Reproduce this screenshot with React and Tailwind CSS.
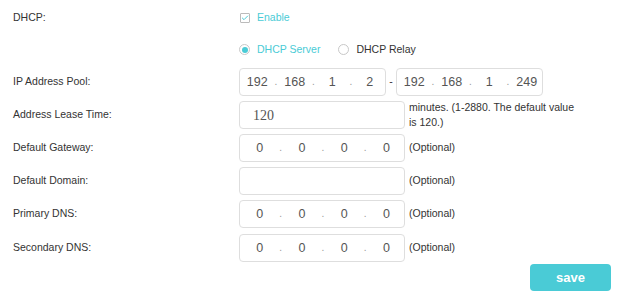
import { Check } from 'lucide-react'

const FONT = { fontFamily: '"Liberation Sans", Arial, sans-serif' }

function IpBox({ parts, width }) {
  return (
    <div className={`flex h-[28px] items-center rounded-[4px] border border-[#dedede] bg-white pl-[2px] ${width}`}>
      {parts.map((p, i) => (
        <div key={i} className="contents">
          {i > 0 && <span className="w-[7px] text-center text-[10px] leading-none text-[#999]">.</span>}
          <span className="flex-1 text-center text-[12.5px] text-[#555]">{p}</span>
        </div>
      ))}
    </div>
  )
}

function Row({ label, children, className = '' }) {
  return (
    <div className={`flex items-center ${className}`}>
      <div className="w-[226px] text-[10.5px] text-[#333]">{label}</div>
      {children}
    </div>
  )
}

export default function App() {
  return (
    <div className="h-[302px] w-[619px] bg-white pl-[13px] pt-[5px]" style={FONT}>
      <Row label="DHCP:" className="h-[25px]">
        <div className="ml-[1px] flex items-center">
          <span className="flex h-[10px] w-[10px] items-center justify-center rounded-[1px] border border-[#bbb] bg-white">
            <Check size={8} strokeWidth={3} className="text-[#4acbd6]" />
          </span>
          <span className="ml-[7px] text-[10.5px] text-[#4acbd6]">Enable</span>
        </div>
      </Row>

      <Row label="" className="mt-[7px] h-[25px]">
        <div className="flex items-center">
          <span className="flex h-[11px] w-[11px] items-center justify-center rounded-full border border-[#c8c8c8] bg-white">
            <span className="h-[6px] w-[6px] rounded-full bg-[#4acbd6]" />
          </span>
          <span className="ml-[7px] text-[10.5px] text-[#4acbd6]">DHCP Server</span>
          <span className="ml-[18px] h-[11px] w-[11px] rounded-full border border-[#c8c8c8] bg-white" />
          <span className="ml-[7px] text-[10.5px] text-[#333]">DHCP Relay</span>
        </div>
      </Row>

      <Row label="IP Address Pool:" className="mt-[6px] h-[28px]">
        <IpBox parts={['192', '168', '1', '2']} width="w-[147px]" />
        <span className="w-[10px] text-center text-[10.5px] text-[#333]">-</span>
        <IpBox parts={['192', '168', '1', '249']} width="w-[147px]" />
      </Row>

      <Row label="Address Lease Time:" className="mt-[5px] h-[28px]">
        <div className="flex h-[28px] w-[166px] items-center rounded-[4px] border border-[#dedede] pl-[13px]">
          <span className="text-[14px] text-[#555]" style={{ fontFamily: '"Liberation Serif", "Times New Roman", serif' }}>120</span>
        </div>
        <p className="ml-[4px] w-[172px] text-[10.5px] leading-[15.5px] text-[#333]">
          minutes. (1-2880. The default value is 120.)
        </p>
      </Row>

      <Row label="Default Gateway:" className="mt-[5px] h-[28px]">
        <IpBox parts={['0', '0', '0', '0']} width="w-[166px]" />
        <span className="ml-[4px] text-[10.5px] text-[#333]">(Optional)</span>
      </Row>

      <Row label="Default Domain:" className="mt-[5px] h-[28px]">
        <div className="h-[28px] w-[166px] rounded-[4px] border border-[#dedede]" />
        <span className="ml-[4px] text-[10.5px] text-[#333]">(Optional)</span>
      </Row>

      <Row label="Primary DNS:" className="mt-[5px] h-[28px]">
        <IpBox parts={['0', '0', '0', '0']} width="w-[166px]" />
        <span className="ml-[4px] text-[10.5px] text-[#333]">(Optional)</span>
      </Row>

      <Row label="Secondary DNS:" className="mt-[6px] h-[28px]">
        <IpBox parts={['0', '0', '0', '0']} width="w-[166px]" />
        <span className="ml-[4px] text-[10.5px] text-[#333]">(Optional)</span>
      </Row>

      <div className="mt-[2px] flex justify-end pr-[8px]">
        <button className="h-[27px] w-[81px] rounded-[4px] bg-[#4acbd6] text-[13px] font-bold text-white">
          save
        </button>
      </div>
    </div>
  )
}
